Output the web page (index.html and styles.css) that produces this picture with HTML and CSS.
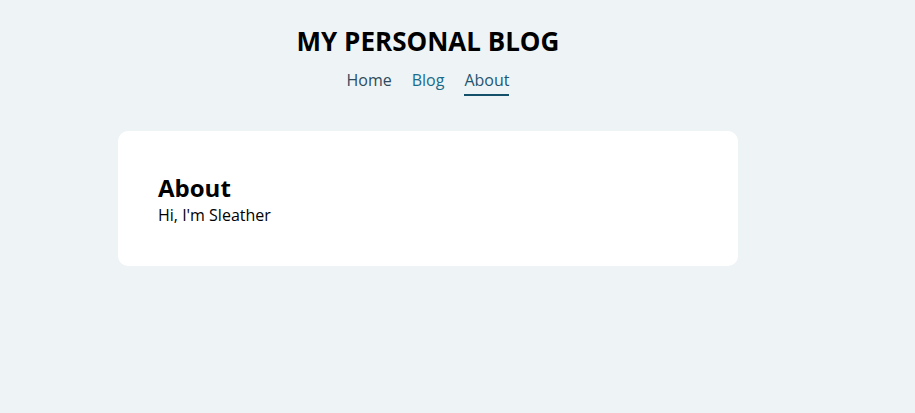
FILE: index.html
```html
<!DOCTYPE html>
<html lang="en">
<head>
<meta charset="utf-8">
<title>My Personal Blog</title>
<link rel="stylesheet" href="styles.css">
</head>
<body>
<div class="page">
  <header class="header">
    <h1 class="site-title">MY PERSONAL BLOG</h1>
    <nav class="nav">
      <a class="nav-link home" href="#">Home</a>
      <a class="nav-link blog" href="#">Blog</a>
      <a class="nav-link active" href="#">About</a>
    </nav>
  </header>
  <main class="card">
    <h2 class="card-title">About</h2>
    <p class="card-text">Hi, I'm Sleather</p>
  </main>
</div>
</body>
</html>
```
FILE: styles.css
```css
html, body {
  margin: 0;
  padding: 0;
}
body {
  background: #eef3f6;
  font-family: "Open Sans", "Noto Sans", sans-serif;
  color: #000;
}
.page {
  width: 620px;
  margin-left: 118px;
  padding-top: 23px;
}
.header {
  display: flex;
  flex-direction: column;
  align-items: center;
}
.site-title {
  margin: 0;
  font-size: 26px;
  font-weight: 700;
  line-height: 36px;
}
.nav {
  display: flex;
  gap: 20px;
  margin-top: 9px;
}
.nav-link {
  font-size: 16px;
  line-height: 24px;
  text-decoration: none;
  padding-bottom: 2px;
  border-bottom: 2px solid transparent;
}
.home { color: #2d4b5c; }
.blog { color: #1b6b8a; }
.active {
  color: #1e5670;
  border-bottom-color: #15506a;
}
.card {
  margin-top: 35px;
  background: #fff;
  border-radius: 10px;
  padding: 42px 40px 39px;
}
.card-title {
  margin: 0;
  font-size: 24px;
  font-weight: 700;
  line-height: 30px;
}
.card-text {
  margin: 0;
  font-size: 16px;
  line-height: 24px;
}
```
